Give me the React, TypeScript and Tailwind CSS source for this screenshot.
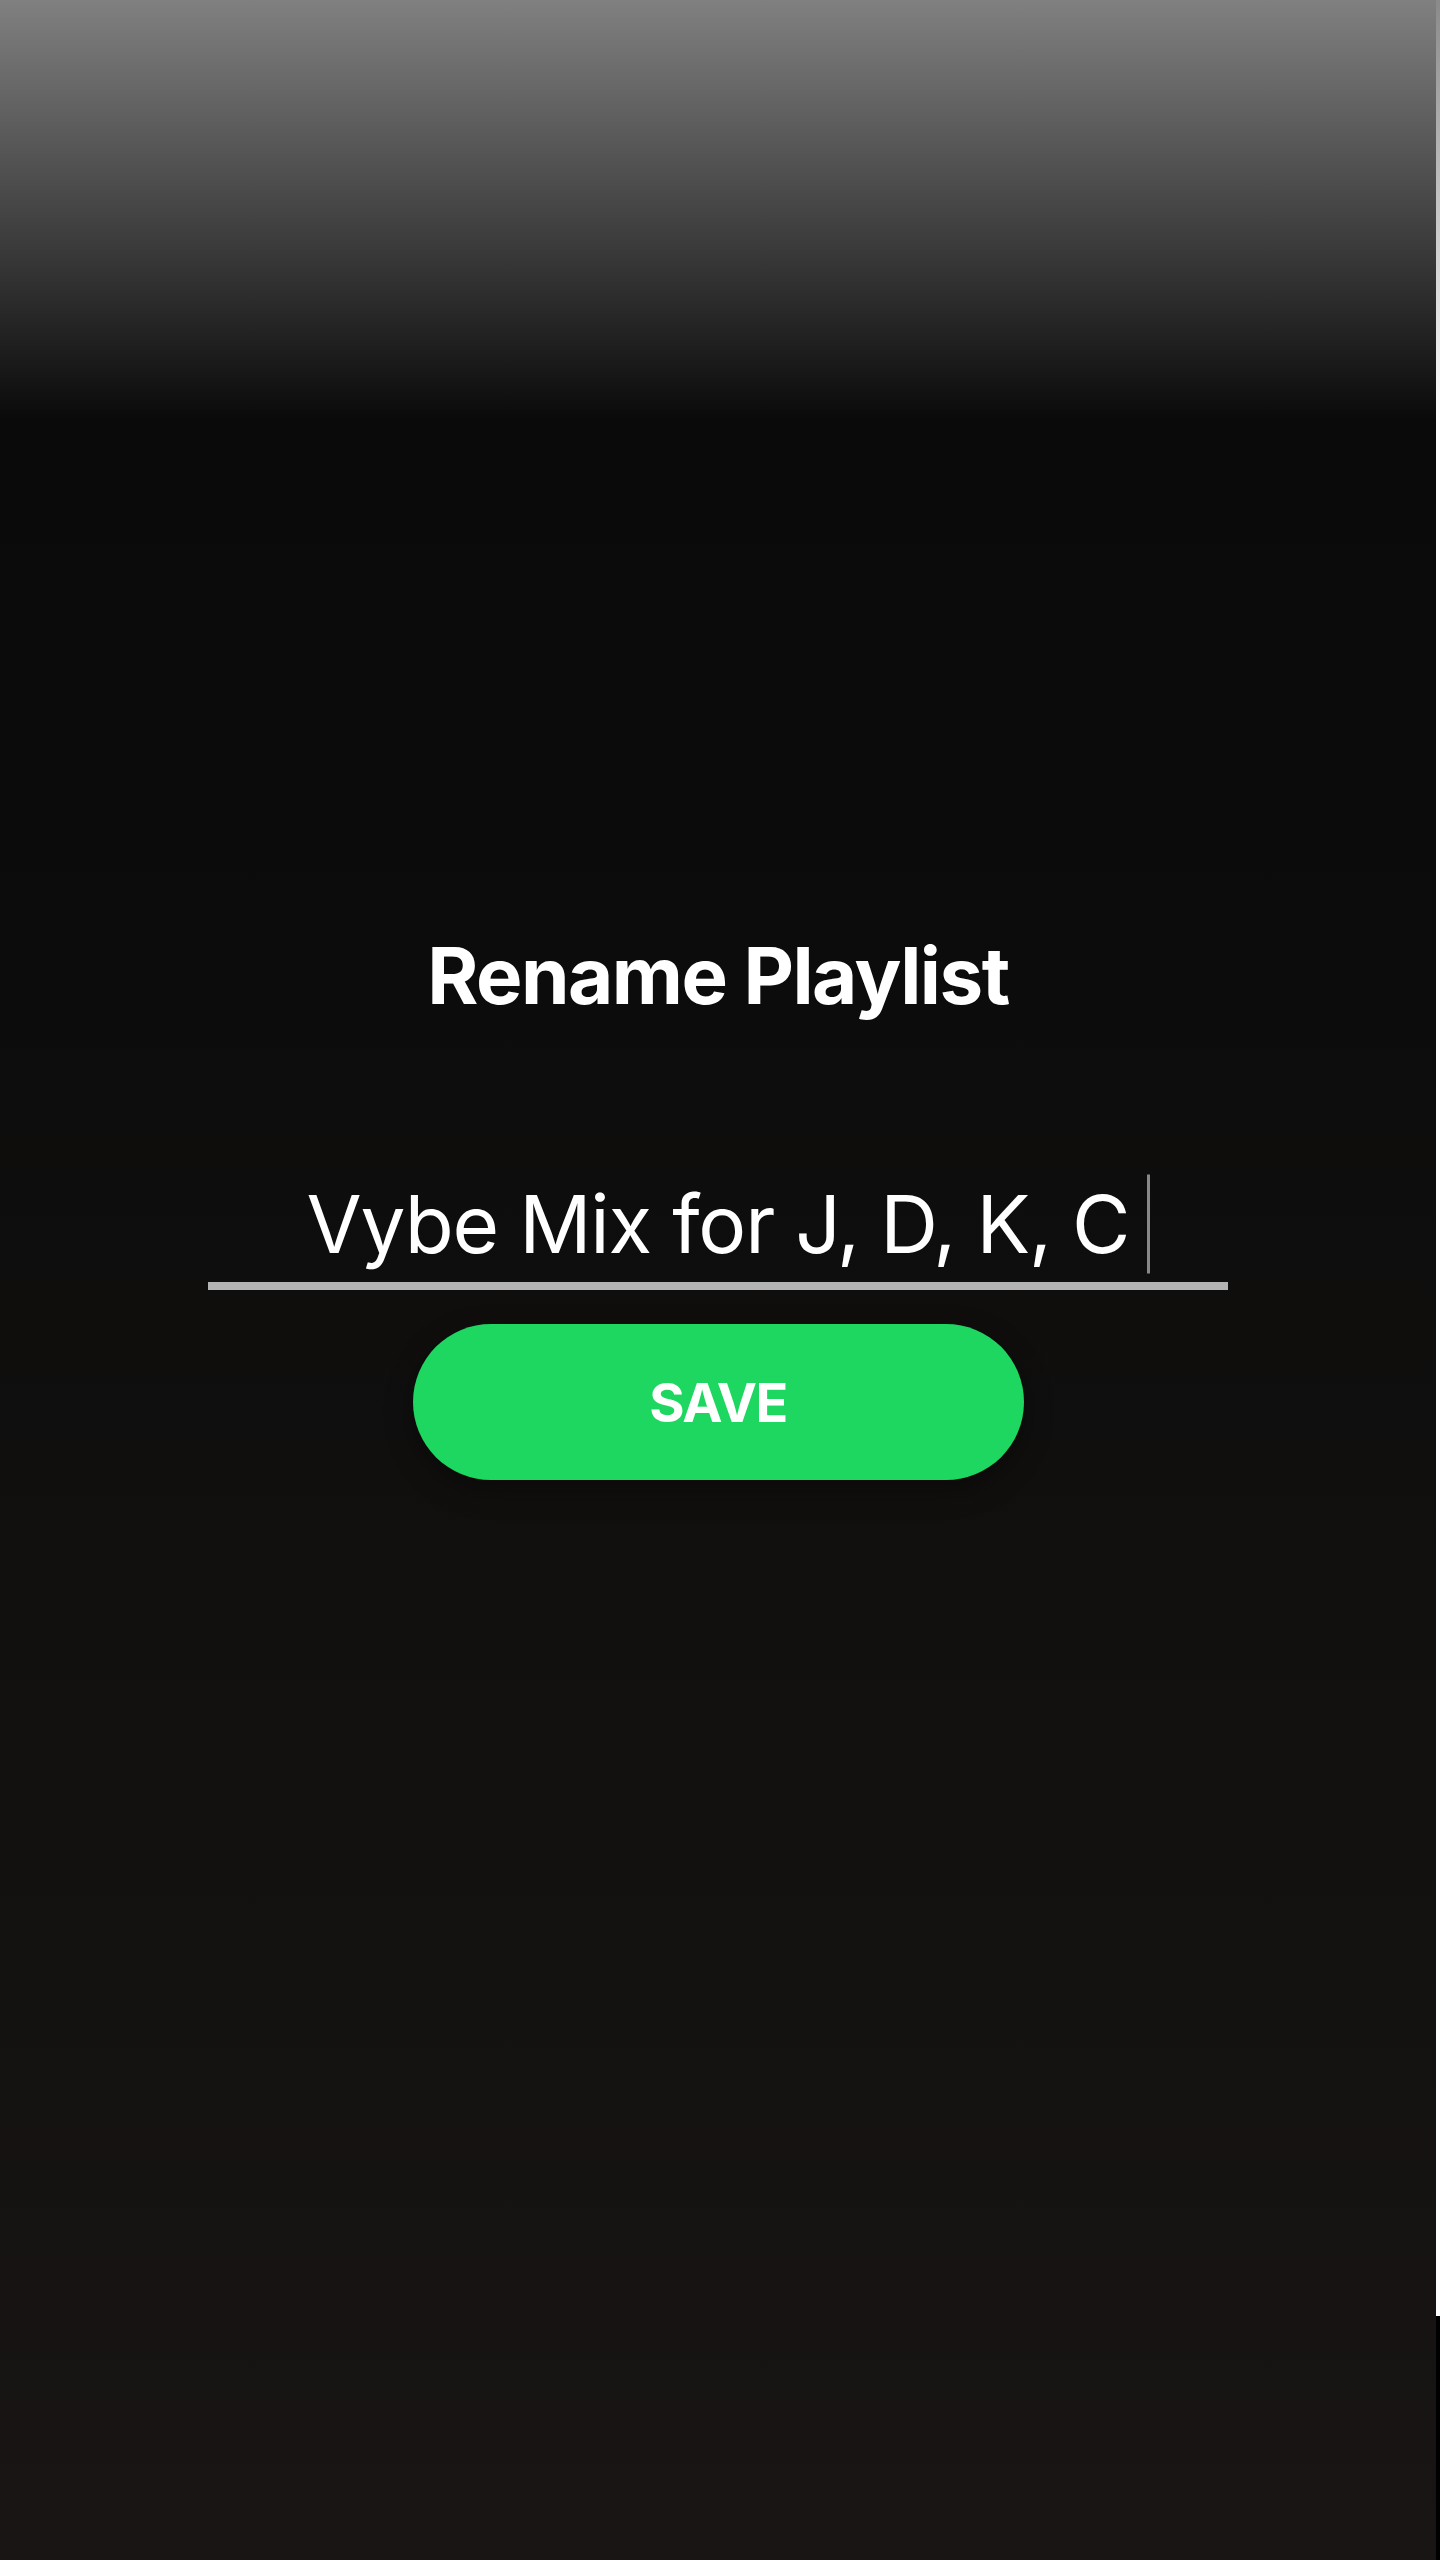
import React from 'react';

const App: React.FC = () => {
  const [name] = React.useState('Vybe Mix for J, D, K, C');

  return (
    <div className="flex w-[1440px] h-[2560px] overflow-hidden font-['Inter',sans-serif]">
      <div className="flex flex-col items-center w-[1436px] h-full bg-[linear-gradient(180deg,#808080_0px,#0a0a0a_420px,#0d0c0c_1000px,#11100f_1600px,#181514_2560px)]">
        <h1 className="mt-[937px] text-[78px] leading-none font-bold tracking-[-1.5px] text-white">
          Rename Playlist
        </h1>

        <div className="mt-[159px] flex h-[99px] items-center">
          <div className="relative">
            <span className="text-[80px] leading-none tracking-[-1.2px] text-white">{name}</span>
            <span className="absolute top-1/2 left-full ml-[18px] h-[99px] w-[3px] -translate-y-1/2 bg-[#888888]" />
          </div>
        </div>
        <div className="mt-[9px] h-[8px] w-[1020px] bg-[#b3b3b3]" />

        <button className="mt-[34px] flex h-[156px] w-[611px] items-center justify-center rounded-full bg-[#1ed760] text-[54px] font-bold tracking-[-1.5px] text-white shadow-[0_10px_28px_rgba(0,0,0,0.35)]">
          SAVE
        </button>
      </div>

      <div className="flex w-[4px] flex-col">
        <div className="h-[2316px] bg-[linear-gradient(180deg,#8a8a8a_0px,#ffffff_420px)]" />
        <div className="flex-1 bg-black" />
      </div>
    </div>
  );
};

export default App;
